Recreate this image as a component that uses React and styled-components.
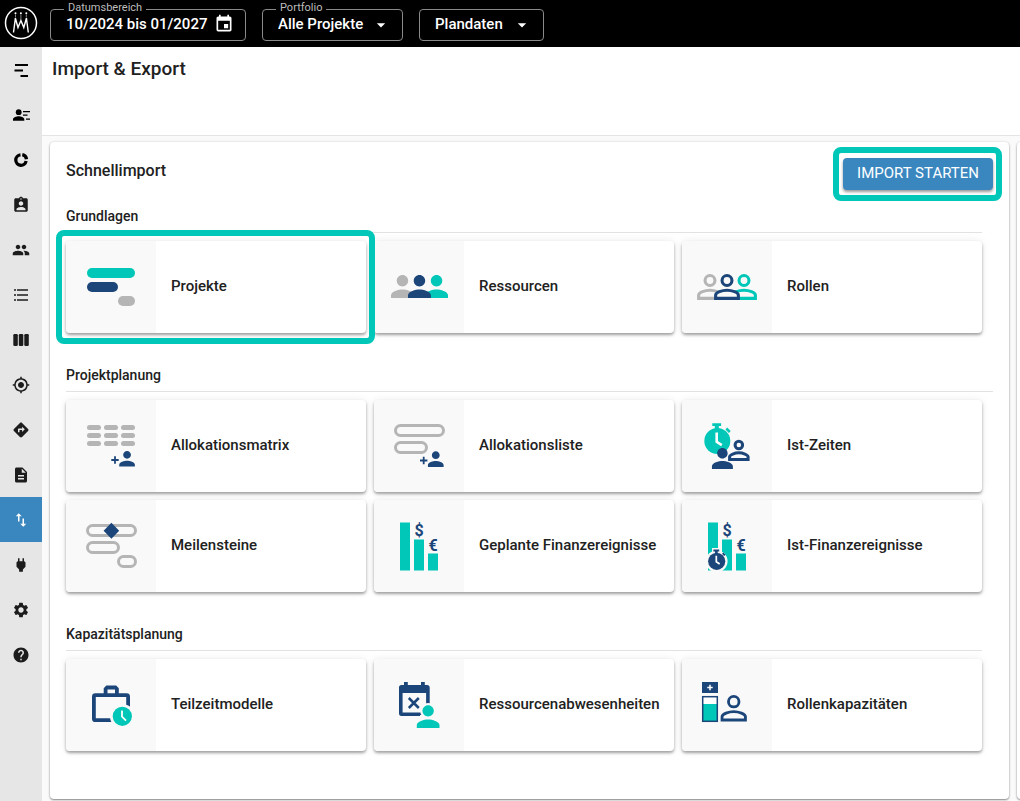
import React from "react";
import styled, { createGlobalStyle } from "styled-components";
import {
  MdArrowDropDown,
  MdAssignmentInd,
  MdDescription,
  MdDirections,
  MdEvent,
  MdHelp,
  MdImportExport,
  MdMyLocation,
  MdPeople,
  MdPower,
  MdSettings,
} from "react-icons/md";

const TEAL = "#00c7b7";
const NAVY = "#1c467a";
const GRAY = "#b5b5b5";
const BLUE = "#3a87c0";
const TILE_BG = "#f9f9f9";

const GlobalStyle = createGlobalStyle`
  * {
    box-sizing: border-box;
  }

  body {
    margin: 0;
    background: #fafafa;
    color: #212121;
    font-family: Roboto, "Liberation Sans", sans-serif;
    font-size: 14px;
  }

  button,
  select {
    font-family: inherit;
  }
`;

const Page = styled.div`
  display: flex;
  flex-direction: column;
  min-height: 100vh;
`;

const TopBar = styled.header`
  display: flex;
  align-items: flex-start;
  height: 47px;
  padding-left: 4px;
  background: #000;
`;

const LogoLink = styled.a`
  display: flex;
  margin: 6px 12px 0 0;
`;

const Field = styled.div`
  position: relative;
  display: flex;
  margin: 9px 16px 0 0;
`;

const FieldLabel = styled.label`
  position: absolute;
  top: -8px;
  left: 14px;
  padding: 0 4px;
  background: #000;
  color: #bdbdbd;
  font-size: 11px;
  line-height: 14px;
`;

const DateButton = styled.button`
  display: flex;
  align-items: center;
  justify-content: space-between;
  width: 196px;
  height: 32px;
  padding: 0 11px 2px 15px;
  border: 1px solid #8a8a8a;
  border-radius: 4px;
  background: transparent;
  color: #fff;
  font-size: 15px;
  font-weight: 500;
`;

const FieldSelect = styled.select`
  width: ${({ $width }) => $width}px;
  height: 32px;
  padding: 0 32px 2px 15px;
  border: 1px solid #8a8a8a;
  border-radius: 4px;
  appearance: none;
  background: transparent;
  color: #fff;
  font-size: 15px;
  font-weight: 500;
`;

const Caret = styled(MdArrowDropDown)`
  position: absolute;
  top: 6px;
  right: 12px;
  color: #fff;
  font-size: 20px;
  pointer-events: none;
`;

const Columns = styled.div`
  display: flex;
  flex: 1;
`;

const SideNav = styled.nav`
  display: flex;
  flex-direction: column;
  flex: none;
  width: 42px;
  background: #e6e6e6;
`;

const NavLink = styled.a`
  display: flex;
  align-items: center;
  justify-content: center;
  height: 45px;
  background: ${({ $active }) => ($active ? BLUE : "transparent")};
  color: ${({ $active }) => ($active ? "#fff" : "#1c1c1c")};
  font-size: 18px;
`;

const Main = styled.main`
  display: flex;
  flex-direction: column;
  flex: 1;
  min-width: 0;
`;

const PageHead = styled.div`
  height: 89px;
  padding: 10px;
  border-bottom: 1px solid #e4e4e4;
  background: #fff;
`;

const PageTitle = styled.h1`
  margin: 0;
  font-size: 19px;
  font-weight: 500;
  line-height: 24px;
`;

const Panels = styled.div`
  display: grid;
  grid-template-columns: minmax(0, 1fr) 3px;
  gap: 8px;
  flex: 1;
  padding: 6px 0 2px 8px;
  overflow: hidden;
`;

const Panel = styled.section`
  padding: 16px;
  border-radius: 4px;
  background: #fff;
  box-shadow: 0 1px 2px rgba(0, 0, 0, 0.45), 0 0 3px rgba(0, 0, 0, 0.1);
`;

const NextPanel = styled(Panel)`
  width: 480px;
`;

const PanelHead = styled.div`
  display: flex;
  align-items: flex-start;
  justify-content: space-between;
  height: 48px;
`;

const PanelTitle = styled.h2`
  margin: 0;
  font-size: 16px;
  font-weight: 500;
  line-height: 26px;
`;

const Highlighted = styled.div`
  position: relative;
`;

const Ring = styled.div`
  position: absolute;
  inset: -11px -9px -11px -10px;
  z-index: 1;
  border: 6px solid ${TEAL};
  border-radius: 8px;
  pointer-events: none;
`;

const StartButton = styled.button`
  height: 32px;
  padding: 0 14px 2px;
  border: 0;
  border-radius: 4px;
  background: ${BLUE};
  box-shadow: 0 2px 3px rgba(0, 0, 0, 0.4);
  color: #fff;
  font-size: 15px;
  font-weight: 400;
`;

/* shrinks to its tiles, so the rule ends with the last one */
const Group = styled.section`
  width: fit-content;
  margin-bottom: 32px;
`;

const GroupTitle = styled.h3`
  margin: 0 0 8px;
  padding-bottom: 6px;
  border-bottom: 1px solid #e2e2e2;
  font-size: 14px;
  font-weight: 500;
  line-height: 20px;
`;

const Tiles = styled.div`
  display: flex;
  flex-wrap: wrap;
  gap: 8px;
`;

const Tile = styled.button`
  display: flex;
  align-items: center;
  width: 300px;
  height: 92px;
  padding: 0;
  border: 0;
  border-radius: 4px;
  overflow: hidden;
  background: #fff;
  box-shadow: 0 2px 3px rgba(0, 0, 0, 0.35), 0 0 8px rgba(0, 0, 0, 0.08);
  color: #212121;
  font-size: 15px;
  font-weight: 500;
  text-align: left;
`;

const TilePicture = styled.svg`
  flex: none;
  width: 90px;
  height: 92px;
  margin-right: 15px;
  background: ${TILE_BG};
`;

const TileLabel = styled.span`
  padding-bottom: 3px;
`;

const GlyphText = styled.text`
  fill: ${NAVY};
  font-size: 16px;
  font-weight: 700;
  text-anchor: middle;
`;

const Logo = () => (
  <svg width="34" height="34" viewBox="0 0 34 34" fill="none" stroke="#fff">
    <circle cx="17" cy="17" r="15.5" strokeWidth="1.5" />
    <path
      d="M9.500 26.500 11.400 12.200 14 21.500 16.900 14.500 19.800 21.500 22.400 12.200 24.300 26.500"
      strokeWidth="1.400"
    />
    <path d="M11.500 8.500v3M16.900 8.500v5M22.300 8.500v3" strokeWidth="0.500" />
    <g fill="#fff" stroke="none">
      <circle cx="11.500" cy="7.300" r="1" />
      <circle cx="16.900" cy="7.300" r="1" />
      <circle cx="22.300" cy="7.300" r="1" />
    </g>
  </svg>
);

const GanttIcon = () => (
  <svg width="18" height="18" viewBox="0 0 18 18" fill="#000">
    <path d="M3 3h13v2H3zM2.500 8.500h8.500v2H2.500zM8.500 14h7.500v2H8.500z" />
  </svg>
);

const StaffIcon = () => (
  <svg width="18" height="18" viewBox="0 0 18 18" fill="#000">
    <circle cx="6.700" cy="6.200" r="2.900" />
    <path d="M1 14.700v-1.400c0-2 3.600-3 5.700-3s5.600 1 5.600 3v1.400zM11 5h7v1.300h-7zM11 8.500h4.500v1.300H11zM14 12.500h4v1.300h-4z" />
  </svg>
);

const DonutIcon = () => (
  <svg
    width="18"
    height="18"
    viewBox="0 0 18 18"
    fill="none"
    stroke="#000"
    strokeWidth="3.300"
  >
    <path d="M8.500 3.900A5.200 5.200 0 1 0 14.100 10" />
    <path d="M10.300 3.700A5.300 5.300 0 0 1 14.500 8.300" />
  </svg>
);

const ListIcon = () => (
  <svg width="18" height="18" viewBox="0 0 18 18" fill="#1c1c1c">
    <path d="M2 3.300h2v1.500H2zM5 3.300h11v1.500H5zM2 8.300h2v1.500H2zM5 8.300h11v1.500H5zM2 13.300h2v1.500H2zM5 13.300h11v1.500H5z" />
  </svg>
);

const ColumnsIcon = () => (
  <svg width="18" height="18" viewBox="0 0 18 18" fill="#1c1c1c">
    <rect x="1.300" y="3" width="4.500" height="12" rx="1.200" />
    <rect x="6.800" y="3" width="4.500" height="12" rx="1.200" />
    <rect x="12.300" y="3" width="4.500" height="12" rx="1.200" />
  </svg>
);

const Person = ({ x, y, scale, color }) => (
  <path
    transform={`translate(${x} ${y}) scale(${scale})`}
    fill={color}
    d="M12 12c2.210 0 4-1.790 4-4s-1.790-4-4-4-4 1.790-4 4 1.790 4 4 4zm0 2c-2.670 0-8 1.340-8 4v2h16v-2c0-2.660-5.330-4-8-4z"
  />
);

const PersonOutline = ({ x, y, scale, color, width = 1.9 }) => (
  <g
    transform={`translate(${x} ${y}) scale(${scale})`}
    fill={TILE_BG}
    stroke={color}
    strokeWidth={width}
  >
    <circle cx="12" cy="8" r={4 - width / 2} />
    <path d="M5 19v-2c0-1.600 4-3.050 7-3.050s7 1.450 7 3.050v2z" />
  </g>
);

const Pill = ({ x, y, width }) => (
  <rect
    x={x + 1.5}
    y={y + 1.5}
    width={width - 3}
    height="10"
    rx="5"
    fill="none"
    stroke={GRAY}
    strokeWidth="3"
  />
);

const Plus = ({ x, y }) => (
  <path
    d={`M${x - 3.7} ${y}h7.4M${x} ${y - 3.7}v7.4`}
    stroke={NAVY}
    strokeWidth="1.800"
  />
);

const Stopwatch = ({ color, halo }) => (
  <g>
    {halo && <circle r="16.500" fill={TILE_BG} />}
    {halo && <path d="M-7-20H7v8H-7z" fill={TILE_BG} />}
    <circle r="13" fill={color} />
    <path d="M-5-17.700h8.800v2.800H1.500v3h-4v-3H-5z" fill={color} />
    <path d="M9-12.500 12.500-9" stroke={color} strokeWidth="2.500" />
    <path
      d="M-.6-8.500V.8L4.500 4.200"
      fill="none"
      stroke="#fff"
      strokeWidth="2.600"
    />
  </g>
);

const MoneyBars = () => (
  <g>
    <path d="M26 22.500h10v48H26zM40 39.500h10v31H40zM54 53.500h10v17H54z" fill={TEAL} />
    <GlyphText x="45" y="36">$</GlyphText>
    <GlyphText x="59" y="51">€</GlyphText>
  </g>
);

const pictures = {
  projects: (
    <>
      <rect x="21" y="27" width="48" height="10" rx="5" fill={TEAL} />
      <rect x="21" y="41" width="31" height="10" rx="5" fill={NAVY} />
      <rect x="52" y="55" width="17" height="10" rx="5" fill={GRAY} />
    </>
  ),
  resources: (
    <>
      <Person x={11.3} y={28.4} scale={1.43} color={GRAY} />
      <Person x={45.4} y={28.4} scale={1.43} color={TEAL} />
      <Person x={28.3} y={28.4} scale={1.43} color={NAVY} />
    </>
  ),
  roles: (
    <>
      <PersonOutline x={8.5} y={26.5} scale={1.625} color={GRAY} />
      <PersonOutline x={42.5} y={26.5} scale={1.625} color={TEAL} />
      <PersonOutline x={25.5} y={26.5} scale={1.625} color={NAVY} />
    </>
  ),
  matrix: (
    <>
      {[25, 33, 41].map((y) =>
        [21, 38, 55].map((x) => (
          <rect key={`${x}-${y}`} x={x} y={y} width="14" height="5" rx="2.500" fill={GRAY} />
        ))
      )}
      <Plus x={49} y={60} />
      <Person x={49.3} y={47} scale={0.98} color={NAVY} />
    </>
  ),
  list: (
    <>
      <Pill x={20} y={24} width={51} />
      <Pill x={20} y={41} width={34} />
      <Plus x={49.7} y={60.5} />
      <Person x={50} y={47.3} scale={0.98} color={NAVY} />
    </>
  ),
  times: (
    <>
      <g transform="translate(35.3 41)">
        <Stopwatch color={TEAL} />
      </g>
      <PersonOutline x={41} y={34.4} scale={1.32} color={NAVY} width={2.3} />
      <Person x={24.7} y={42.7} scale={1.31} color={NAVY} />
    </>
  ),
  milestones: (
    <>
      <Pill x={20} y={24} width={51} />
      <Pill x={20} y={41} width={34} />
      <Pill x={51} y={55} width={20} />
      <path d="M45.400 22.700l7.800 8-7.800 8-7.800-8z" fill={NAVY} />
    </>
  ),
  plannedMoney: <MoneyBars />,
  actualMoney: (
    <>
      <MoneyBars />
      <g transform="translate(34.7 61.3) scale(0.66)">
        <Stopwatch color={NAVY} halo />
      </g>
    </>
  ),
  partTime: (
    <>
      <g fill="none" stroke={NAVY}>
        <rect x="27.900" y="36.200" width="34.200" height="25" rx="1.500" strokeWidth="3.800" />
        <path d="M39.600 35v-5l1.500-1.500h8.300l1.500 1.500v5" strokeWidth="3.800" />
      </g>
      <circle cx="56.300" cy="57.300" r="12.300" fill={TILE_BG} />
      <circle cx="56.300" cy="57.300" r="9.600" fill={TEAL} />
      <path d="M56 51.500v6.200l4 4" fill="none" stroke="#fff" strokeWidth="1.800" />
    </>
  ),
  absences: (
    <>
      <path
        d="M30 23h3.800v3h13.200v-3h3.800v3H53a2.700 2.700 0 0 1 2.700 2.700v25.600A2.700 2.700 0 0 1 53 57H28a2.700 2.700 0 0 1-3-2.700V28.700A2.700 2.700 0 0 1 28 26h2zM28.600 34v19.500h23.500V34z"
        fill={NAVY}
        fillRule="evenodd"
      />
      <path d="M34.800 39l10 10M44.800 39l-10 10" stroke={NAVY} strokeWidth="2.500" />
      <circle cx="54.200" cy="52" r="8" fill={TILE_BG} />
      <path d="M46 56h17v6H46z" fill={TILE_BG} />
      <Person x={37.1} y={40.5} scale={1.42} color={TEAL} />
    </>
  ),
  capacities: (
    <>
      <rect x="20" y="23" width="16" height="11" fill={NAVY} />
      <path d="M25.300 28.500h5.400M28 25.800v5.400" stroke="#fff" strokeWidth="1.500" />
      <rect x="20.800" y="37.800" width="14.400" height="24.400" fill="#fff" />
      <rect x="21" y="45" width="14" height="17" fill={TEAL} />
      <rect x="20.700" y="37.700" width="14.600" height="24.600" fill="none" stroke={NAVY} strokeWidth="1.500" />
      <PersonOutline x={31.7} y={29.3} scale={1.67} color={NAVY} width={1.7} />
    </>
  ),
};

const navItems = [
  { label: "Projekte", icon: <GanttIcon /> },
  { label: "Ressourcenplanung", icon: <StaffIcon /> },
  { label: "Auswertung", icon: <DonutIcon /> },
  { label: "Rollen", icon: <MdAssignmentInd /> },
  { label: "Ressourcen", icon: <MdPeople /> },
  { label: "Liste", icon: <ListIcon /> },
  { label: "Spalten", icon: <ColumnsIcon /> },
  { label: "Ziele", icon: <MdMyLocation /> },
  { label: "Meilensteine", icon: <MdDirections /> },
  { label: "Berichte", icon: <MdDescription /> },
  { label: "Import & Export", icon: <MdImportExport />, active: true },
  { label: "Integrationen", icon: <MdPower /> },
  { label: "Einstellungen", icon: <MdSettings /> },
  { label: "Hilfe", icon: <MdHelp /> },
];

const groups = [
  {
    title: "Grundlagen",
    tiles: [
      { label: "Projekte", picture: "projects", highlighted: true },
      { label: "Ressourcen", picture: "resources" },
      { label: "Rollen", picture: "roles" },
    ],
  },
  {
    title: "Projektplanung",
    tiles: [
      { label: "Allokationsmatrix", picture: "matrix" },
      { label: "Allokationsliste", picture: "list" },
      { label: "Ist-Zeiten", picture: "times" },
      { label: "Meilensteine", picture: "milestones" },
      { label: "Geplante Finanzereignisse", picture: "plannedMoney" },
      { label: "Ist-Finanzereignisse", picture: "actualMoney" },
    ],
  },
  {
    title: "Kapazitätsplanung",
    tiles: [
      { label: "Teilzeitmodelle", picture: "partTime" },
      { label: "Ressourcenabwesenheiten", picture: "absences" },
      { label: "Rollenkapazitäten", picture: "capacities" },
    ],
  },
];

const ImportTile = ({ label, picture, highlighted }) => (
  <Highlighted>
    <Tile type="button">
      <TilePicture viewBox="0 0 90 92" aria-hidden="true">
        {pictures[picture]}
      </TilePicture>
      <TileLabel>{label}</TileLabel>
    </Tile>
    {highlighted && <Ring />}
  </Highlighted>
);

const App = () => {
  return (
    <Page>
      <GlobalStyle />
      <TopBar>
        <LogoLink href="#" aria-label="Startseite">
          <Logo />
        </LogoLink>
        <Field>
          <DateButton type="button" id="date-range">
            10/2024 bis 01/2027
            <MdEvent size={20} />
          </DateButton>
          <FieldLabel htmlFor="date-range">Datumsbereich</FieldLabel>
        </Field>
        <Field>
          <FieldSelect id="portfolio" $width={141}>
            <option>Alle Projekte</option>
          </FieldSelect>
          <FieldLabel htmlFor="portfolio">Portfolio</FieldLabel>
          <Caret />
        </Field>
        <Field>
          <FieldSelect aria-label="Datenart" $width={125}>
            <option>Plandaten</option>
          </FieldSelect>
          <Caret />
        </Field>
      </TopBar>
      <Columns>
        <SideNav>
          {navItems.map(({ label, icon, active }) => (
            <NavLink key={label} href="#" aria-label={label} $active={active}>
              {icon}
            </NavLink>
          ))}
        </SideNav>
        <Main>
          <PageHead>
            <PageTitle>Import &amp; Export</PageTitle>
          </PageHead>
          <Panels>
            <Panel>
              <PanelHead>
                <PanelTitle>Schnellimport</PanelTitle>
                <Highlighted>
                  <StartButton type="button">IMPORT STARTEN</StartButton>
                  <Ring />
                </Highlighted>
              </PanelHead>
              {groups.map(({ title, tiles }) => (
                <Group key={title}>
                  <GroupTitle>{title}</GroupTitle>
                  <Tiles>
                    {tiles.map((tile) => (
                      <ImportTile key={tile.label} {...tile} />
                    ))}
                  </Tiles>
                </Group>
              ))}
            </Panel>
            <NextPanel />
          </Panels>
        </Main>
      </Columns>
    </Page>
  );
};

export default App;
